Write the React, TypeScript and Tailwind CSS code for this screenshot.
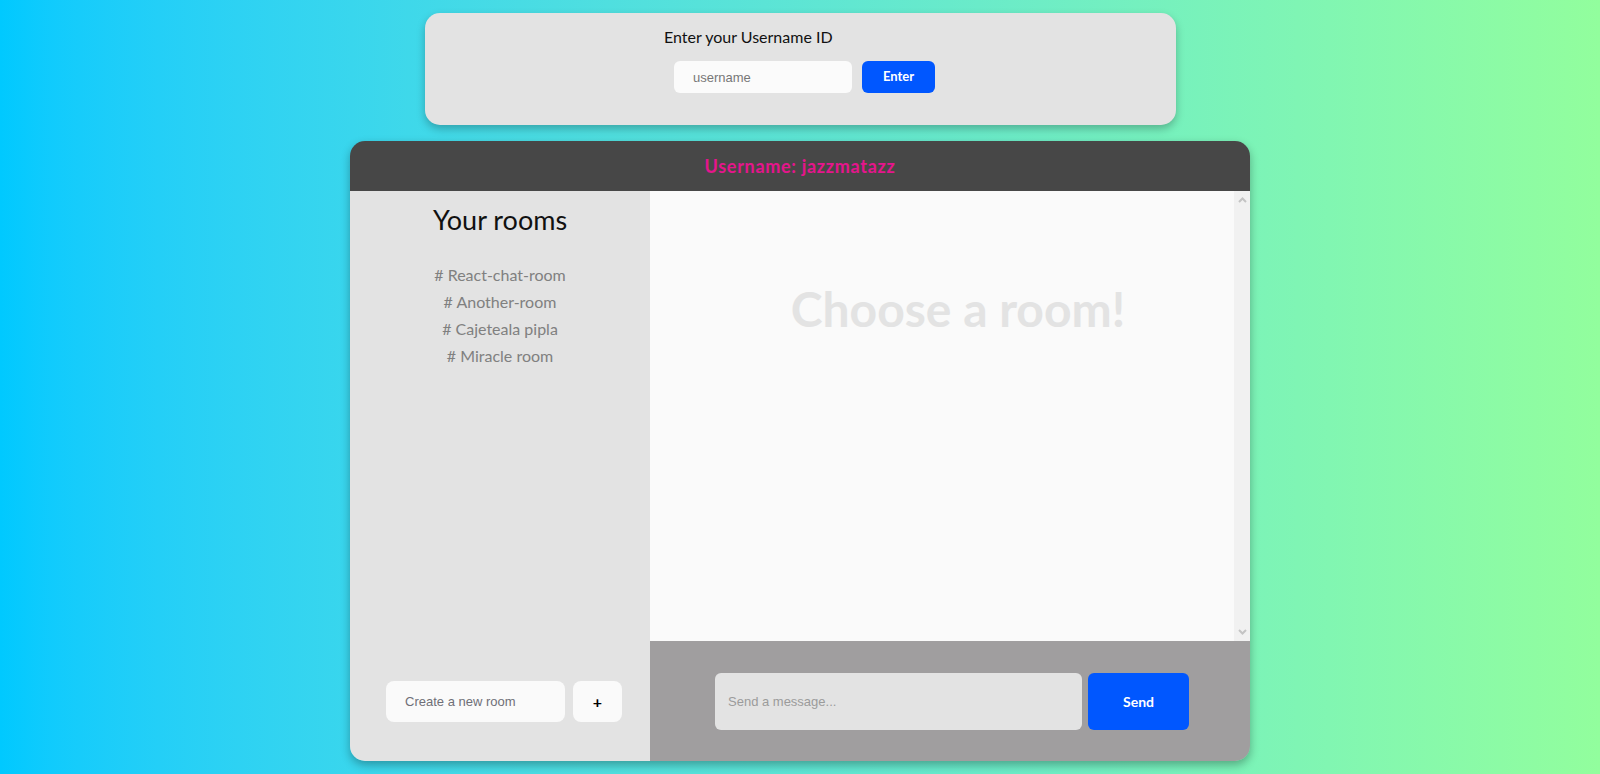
import React from "react";

export default function App() {
  const rooms = ["React-chat-room", "Another-room", "Cajeteala pipla", "Miracle room"];
  return (
    <div
      className="min-h-[774px] w-full flex flex-col items-center pt-[13px] bg-gradient-to-r from-[#00c9ff] to-[#92fe9d]"
      style={{ fontFamily: "Lato, 'Open Sans', sans-serif" }}
    >
      {/* Top card */}
      <div className="w-[751px] h-[112px] rounded-[15px] bg-[#e3e3e3] shadow-[0_4px_8px_rgba(0,0,0,0.25)] pt-[14px]">
        <div className="w-[272px] mx-auto">
          <div className="text-[16px] leading-[20px] text-[#111]">Enter your Username ID</div>
          <div className="flex gap-[10px] mt-[14px] ml-[10px]">
            <input
              placeholder="username"
              className="w-[178px] h-[32px] rounded-[6px] bg-[#fbfbfb] pl-[19px] text-[13px] text-[#333] placeholder:text-[#777] outline-none"
              style={{ fontFamily: "'Liberation Sans', Arial, sans-serif" }}
            />
            <button className="w-[73px] h-[32px] rounded-[6px] bg-[#0057ff] text-white text-[13px] font-bold">
              Enter
            </button>
          </div>
        </div>
      </div>

      {/* Main card */}
      <div className="mt-[16px] w-[900px] h-[620px] rounded-[15px] overflow-hidden shadow-[0_4px_10px_rgba(0,0,0,0.3)] flex flex-col">
        <div className="h-[50px] bg-[#474747] flex items-center justify-center">
          <span className="text-[18px] font-bold tracking-[0.7px] text-[#e5158c]">Username: jazzmatazz</span>
        </div>
        <div className="flex flex-1">
          {/* Sidebar */}
          <div className="w-[300px] bg-[#e3e3e3] flex flex-col pt-[13px] pb-[39px]">
            <div className="text-[27px] leading-[32px] text-center text-[#111]">Your rooms</div>
            <div className="mt-[25px] flex flex-col">
              {rooms.map((r) => (
                <div key={r} className="text-[16px] leading-[27px] text-center text-[#808080]">
                  # {r}
                </div>
              ))}
            </div>
            <div className="mt-auto flex gap-[8px] pl-[36px]">
              <input
                placeholder="Create a new room"
                className="w-[179px] h-[41px] rounded-[8px] bg-[#fafafa] pl-[19px] text-[13px] placeholder:text-[#6f6f77] outline-none"
                style={{ fontFamily: "'Liberation Sans', Arial, sans-serif" }}
              />
              <button className="w-[49px] h-[41px] rounded-[8px] bg-[#fafafa] text-[16px] text-black font-bold">
                +
              </button>
            </div>
          </div>

          {/* Chat column */}
          <div className="flex-1 flex flex-col">
            <div className="h-[450px] bg-[#fafafa] flex">
              <div className="flex-1 pt-[90px] pl-[32px] text-center">
                <div className="text-[48px] leading-[56px] font-bold text-[#e3e3e3]">Choose a room!</div>
              </div>
              <div className="w-[16px] bg-[#f1f1f1] flex flex-col items-center justify-between py-[6px]">
                <svg width="9" height="6" viewBox="0 0 9 6">
                  <path d="M1 5 L4.5 1.5 L8 5" stroke="#c4c4c4" strokeWidth="2" fill="none" />
                </svg>
                <svg width="9" height="6" viewBox="0 0 9 6">
                  <path d="M1 1 L4.5 4.5 L8 1" stroke="#c4c4c4" strokeWidth="2" fill="none" />
                </svg>
              </div>
            </div>
            <div className="flex-1 bg-[#a09e9f] flex items-center justify-center gap-[6px] pl-[4px]">
              <input
                placeholder="Send a message..."
                className="w-[367px] h-[57px] rounded-[6px] bg-[#e3e3e3] pl-[13px] text-[13px] placeholder:text-[#9b9b9b] outline-none"
                style={{ fontFamily: "'Liberation Sans', Arial, sans-serif" }}
              />
              <button className="w-[101px] h-[57px] rounded-[6px] bg-[#0057ff] text-white text-[14px] font-bold">
                Send
              </button>
            </div>
          </div>
        </div>
      </div>
    </div>
  );
}
